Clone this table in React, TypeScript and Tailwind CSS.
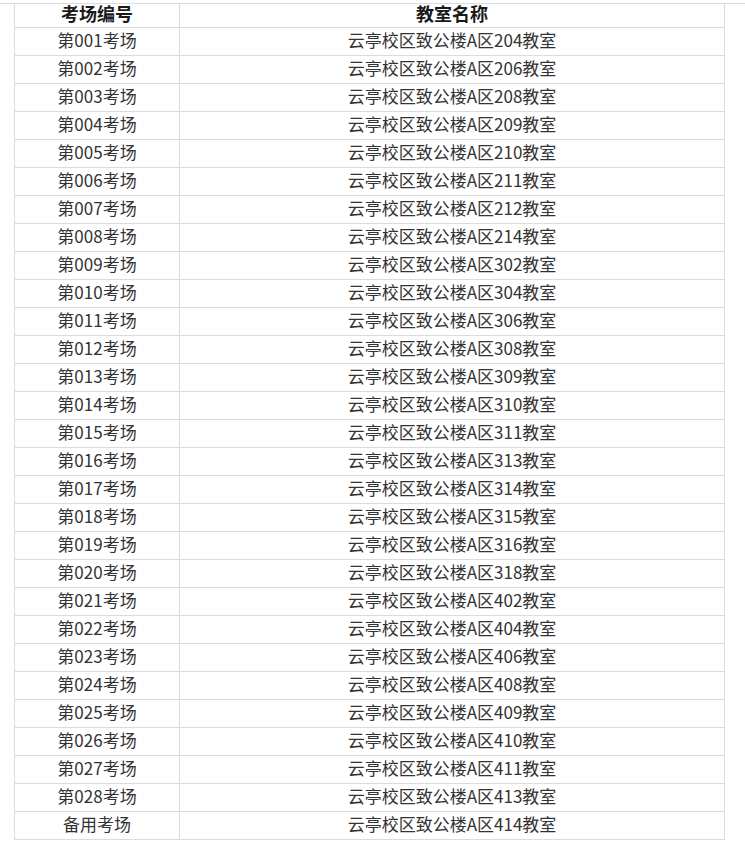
import React from 'react';

const rooms = [
  '204', '206', '208', '209', '210', '211', '212', '214', '302', '304',
  '306', '308', '309', '310', '311', '313', '314', '315', '316', '318',
  '402', '404', '406', '408', '409', '410', '411', '413',
];

const rows = [
  ...rooms.map((r, i) => ({ site: `第${String(i + 1).padStart(3, '0')}考场`, room: `云亭校区致公楼A区${r}教室` })),
  { site: '备用考场', room: '云亭校区致公楼A区414教室' },
];

function App() {
  return (
    <div
      className="min-h-screen bg-white pt-[3px] text-[#333]"
      style={{ fontFamily: '"Noto Sans CJK SC", "Liberation Sans", sans-serif' }}
    >
      <div className="border-t border-[#dcdcdc]">
        <div className="ml-[14px] w-[711px]">
          <div className="flex h-[24px] border-b border-l border-[#dcdcdc] text-[18px] font-bold leading-none text-[#1a1a1a]">
            <div className="flex w-[165px] items-center justify-center border-r border-[#dcdcdc] pb-[5px]">考场编号</div>
            <div className="flex w-[545px] items-center justify-center border-r border-[#dcdcdc] pb-[5px]">教室名称</div>
          </div>
          {rows.map((row) => (
            <div key={row.site} className="flex h-[28px] border-b border-l border-[#dcdcdc] text-[17px] leading-none">
              <div className="flex w-[165px] items-center justify-center border-r border-[#dcdcdc] pb-[4px]">{row.site}</div>
              <div className="flex w-[545px] items-center justify-center border-r border-[#dcdcdc] pb-[4px]">{row.room}</div>
            </div>
          ))}
        </div>
      </div>
    </div>
  );
}

export default App;
